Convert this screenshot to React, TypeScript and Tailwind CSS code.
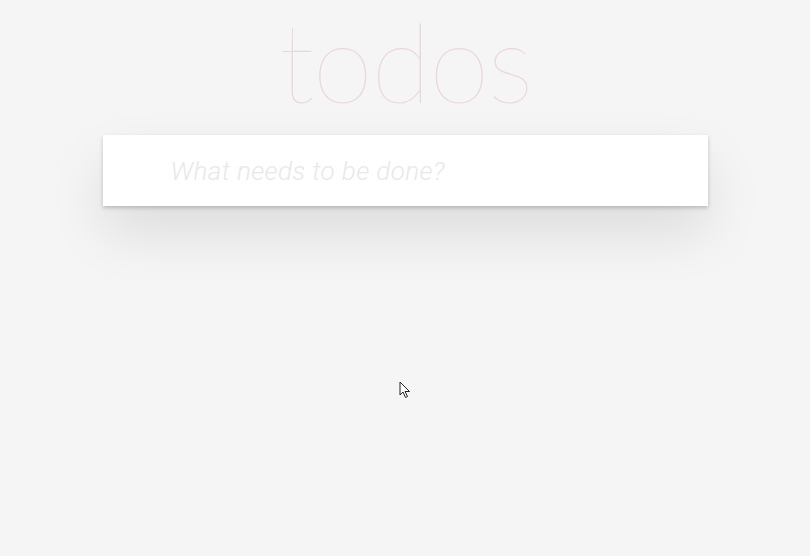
function Cursor() {
  return (
    <svg
      className="absolute left-[399px] top-[381px]"
      width="12"
      height="18"
      viewBox="0 0 12 18"
    >
      <path
        d="M1 1 L1 14 L4 11 L6.5 16.5 L8.5 15.5 L6 10.5 L10.5 10.5 Z"
        fill="#fff"
        stroke="#222"
        strokeWidth="1"
        strokeLinejoin="round"
      />
    </svg>
  );
}

export default function App() {
  return (
    <div className="relative min-h-[556px] w-full bg-[#f5f5f5] font-['Lato',_'Liberation_Sans',_sans-serif]">
      <div className="flex flex-col items-center">
        <h1 className="h-[135px] text-center text-[110px] font-thin leading-[121px] tracking-[-2px] text-[rgba(175,47,47,0.15)]">
          todos
        </h1>
        <section className="w-[605px] bg-white shadow-[0_2px_4px_0_rgba(0,0,0,0.2),0_27px_55px_0_rgba(0,0,0,0.1)]">
          <input
            className="box-border h-[71px] w-full bg-transparent pl-[68px] pr-4 font-['Roboto',_'Liberation_Sans',_sans-serif] text-[26px] font-light italic tracking-[0.4px] text-[#4d4d4d] outline-none placeholder:text-[#e8e8e8]"
            placeholder="What needs to be done?"
          />
        </section>
      </div>
      <Cursor />
    </div>
  );
}
